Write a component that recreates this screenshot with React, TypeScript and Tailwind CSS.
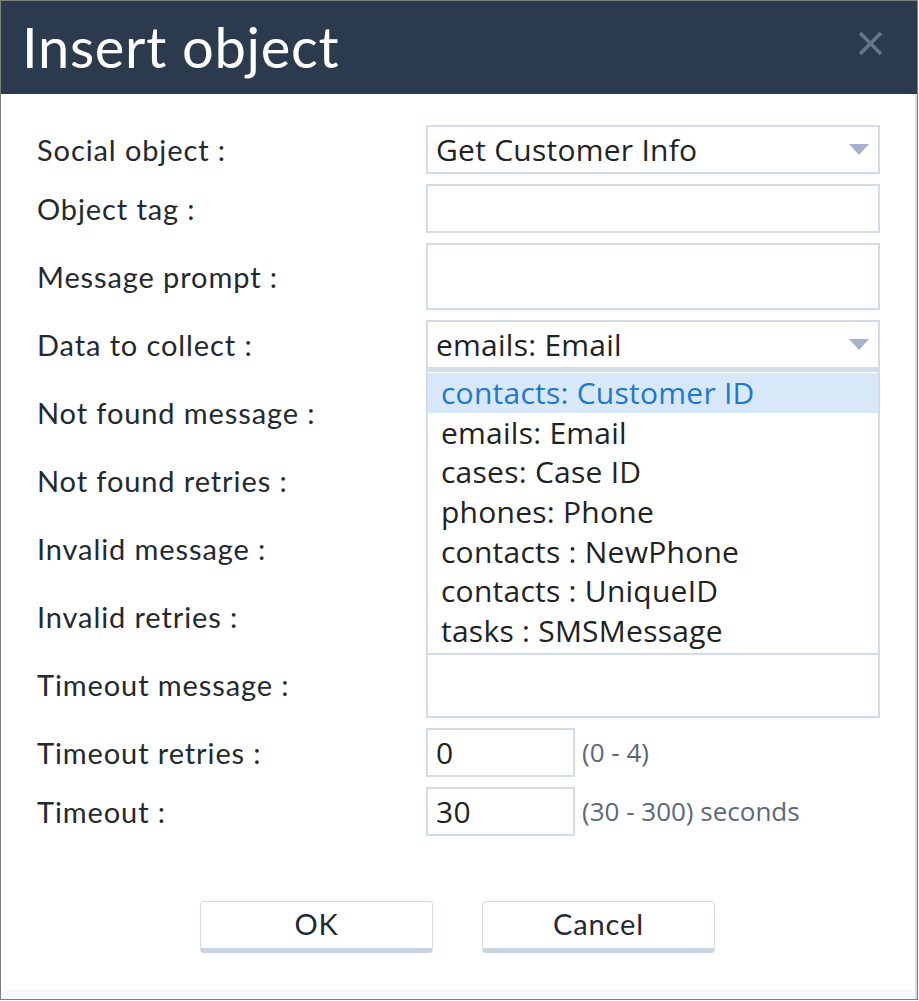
import React from "react";

const label = "font-['Lato','Noto_Sans',sans-serif] text-[29px] tracking-[0.9px] text-[#24292f]";
const field = "font-['Open_Sans','Noto_Sans',sans-serif] text-[30px] tracking-[0.25px] text-[#222]";

const options = [
  "contacts: Customer ID",
  "emails: Email",
  "cases: Case ID",
  "phones: Phone",
  "contacts : NewPhone",
  "contacts : UniqueID",
  "tasks : SMSMessage",
];

function Arrow() {
  return (
    <svg width="20" height="11" viewBox="0 0 20 11" className="shrink-0">
      <polygon points="0,0 20,0 10,11" fill="#a3b3c8" />
    </svg>
  );
}

function Row({ name, children }: { name: string; children: React.ReactNode }) {
  return (
    <>
      <div className={`${label} flex items-center`}>{name}</div>
      <div className="relative">{children}</div>
    </>
  );
}

export default function App() {
  const box = "border-2 border-[#d3dde9] bg-white";
  const hint = "font-['Open_Sans','Noto_Sans',sans-serif] text-[26px] text-[#5b6878]";
  return (
    <div className="w-[919px] h-[1001px] bg-white">
      <div className="w-[918px] h-[1000px] border border-[#7f7f7f] flex flex-col">
        <div className="h-[93px] bg-[#2c3a4e] flex items-center justify-between pl-[21px] pr-[34px]">
          <h1 className="font-['Lato','Noto_Sans',sans-serif] text-[56px] tracking-[0.7px] text-white leading-none pb-[2px]">Insert object</h1>
          <svg width="25" height="25" viewBox="0 0 24 24" className="mb-[8px]">
            <path d="M2 2 L22 22 M22 2 L2 22" stroke="#65768a" strokeWidth="3.5" />
          </svg>
        </div>
        <div className="flex-1 flex flex-col border-r-2 border-[#d3dde9]">
          <div className="grid grid-cols-[389px_454px] gap-y-[10px] pl-[36px] pt-[31px]">
            <Row name="Social object :">
              <div className={`${box} h-[49px] flex items-center justify-between pl-[8px] pr-[9px]`}>
                <span className={field}>Get Customer Info</span>
                <Arrow />
              </div>
            </Row>
            <Row name="Object tag :">
              <div className={`${box} h-[49px]`} />
            </Row>
            <Row name="Message prompt :">
              <div className={`${box} h-[67px]`} />
            </Row>
            <Row name="Data to collect :">
              <div className={`${box} h-[49px] flex items-center justify-between pl-[8px] pr-[9px]`}>
                <span className={field}>emails: Email</span>
                <Arrow />
              </div>
              <div className="absolute left-0 top-full z-10 w-full border-2 border-t-[3px] border-[#d3dde9] bg-white pt-[1px] pb-[2px]">
                {options.map((o, i) => (
                  <div
                    key={o}
                    className={`${field} h-[39.7px] leading-[39.7px] pl-[13px] ${i === 0 ? "bg-[#d9e8f8] !text-[#1d78d0]" : ""}`}
                  >
                    {o}
                  </div>
                ))}
              </div>
            </Row>
            <Row name="Not found message :">
              <div className={`${box} h-[67px]`} />
            </Row>
            <Row name="Not found retries :">
              <div className={`${box} h-[49px]`} />
            </Row>
            <Row name="Invalid message :">
              <div className={`${box} h-[67px]`} />
            </Row>
            <Row name="Invalid retries :">
              <div className={`${box} h-[49px]`} />
            </Row>
            <Row name="Timeout message :">
              <div className={`${box} h-[67px]`} />
            </Row>
            <Row name="Timeout retries :">
              <div className="flex items-center gap-[7px]">
                <div className={`${box} h-[49px] w-[149px] flex items-center pl-[8px]`}>
                  <span className={field}>0</span>
                </div>
                <span className={hint}>(0 - 4)</span>
              </div>
            </Row>
            <Row name="Timeout :">
              <div className="flex items-center gap-[7px]">
                <div className={`${box} h-[49px] w-[149px] flex items-center pl-[8px]`}>
                  <span className={field}>30</span>
                </div>
                <span className={hint}>(30 - 300) seconds</span>
              </div>
            </Row>
          </div>
          <div className="flex justify-center gap-[49px] mt-[65px] pr-[1px]">
            {["OK", "Cancel"].map((b) => (
              <button
                key={b}
                className={`${label} w-[233px] h-[52px] bg-white rounded-[4px] border border-[#d3dde9] border-b-[5px] border-b-[#c9d4e1] pb-[2px]`}
              >
                {b}
              </button>
            ))}
          </div>
          <div className="flex-1" />
          <div className="h-[10px] bg-[#f8f9fb]" />
        </div>
      </div>
    </div>
  );
}
